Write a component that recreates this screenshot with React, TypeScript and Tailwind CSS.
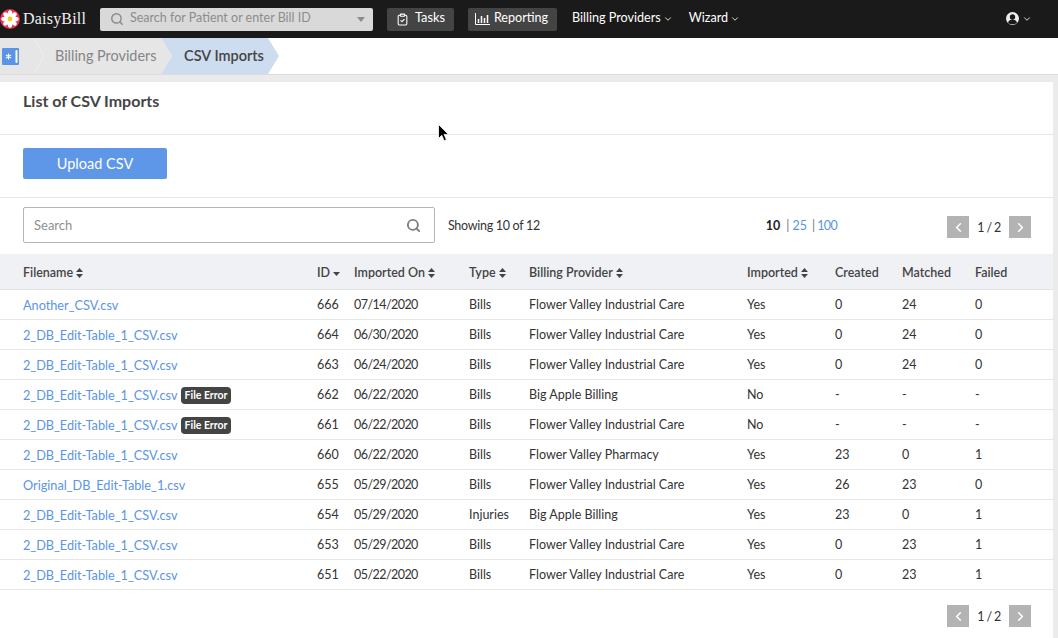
import React from "react";
import { ChevronDown, ChevronLeft, ChevronRight, Search, ClipboardCheck } from "lucide-react";

const font = "font-['Lato','Liberation_Sans',sans-serif]";

type Row = { f: string; err?: boolean; id: string; d: string; t: string; b: string; i: string; c: string; m: string; x: string };
const E = "2_DB_Edit-Table_1_CSV.csv";
const V = "Flower Valley Industrial Care";
const rows: Row[] = [
  { f: "Another_CSV.csv", id: "666", d: "07/14/2020", t: "Bills", b: V, i: "Yes", c: "0", m: "24", x: "0" },
  { f: E, id: "664", d: "06/30/2020", t: "Bills", b: V, i: "Yes", c: "0", m: "24", x: "0" },
  { f: E, id: "663", d: "06/24/2020", t: "Bills", b: V, i: "Yes", c: "0", m: "24", x: "0" },
  { f: E, err: true, id: "662", d: "06/22/2020", t: "Bills", b: "Big Apple Billing", i: "No", c: "-", m: "-", x: "-" },
  { f: E, err: true, id: "661", d: "06/22/2020", t: "Bills", b: V, i: "No", c: "-", m: "-", x: "-" },
  { f: E, id: "660", d: "06/22/2020", t: "Bills", b: "Flower Valley Pharmacy", i: "Yes", c: "23", m: "0", x: "1" },
  { f: "Original_DB_Edit-Table_1.csv", id: "655", d: "05/29/2020", t: "Bills", b: V, i: "Yes", c: "26", m: "23", x: "0" },
  { f: E, id: "654", d: "05/29/2020", t: "Injuries", b: "Big Apple Billing", i: "Yes", c: "23", m: "0", x: "1" },
  { f: E, id: "653", d: "05/29/2020", t: "Bills", b: V, i: "Yes", c: "0", m: "23", x: "1" },
  { f: E, id: "651", d: "05/22/2020", t: "Bills", b: V, i: "Yes", c: "0", m: "23", x: "1" },
];

const grid = "grid grid-cols-[294px_37px_115px_60px_218px_88px_67px_73px_1fr] pl-[23px] items-center";

function Sort() {
  return (
    <svg width="7" height="10" viewBox="0 0 7 10" className="ml-[3px] inline-block fill-[#444]">
      <path d="M3.5 0 7 4H0zM3.5 10 0 6h7z" />
    </svg>
  );
}

function Flower() {
  const petals = [0, 45, 90, 135, 180, 225, 270, 315];
  return (
    <svg width="20" height="20" viewBox="0 0 20 20" className="shrink-0">
      <circle cx="10" cy="10" r="10" fill="#e8304f" />
      {petals.map((a) => (
        <ellipse key={a} cx="10" cy="4.8" rx="2.3" ry="3.5" fill="#fff" transform={`rotate(${a} 10 10)`} />
      ))}
      <circle cx="10" cy="10" r="2.4" fill="#f6c81e" />
    </svg>
  );
}

function Pager() {
  return (
    <div className="flex items-center text-[12.5px] text-[#333]">
      <span className="flex h-[22px] w-[22px] items-center justify-center bg-[#b3b3b3] text-white">
        <ChevronLeft size={15} strokeWidth={2.5} />
      </span>
      <span className="w-[40px] pt-[2px] text-center tracking-[-0.6px]">1 / 2</span>
      <span className="flex h-[22px] w-[22px] items-center justify-center bg-[#b3b3b3] text-white">
        <ChevronRight size={15} strokeWidth={2.5} />
      </span>
    </div>
  );
}

export default function App() {
  return (
    <div className={`${font} relative h-[638px] w-[1058px] overflow-hidden bg-[#ebebeb] text-[13px] text-[#333]`}>
      <header className="flex h-[38px] items-center bg-[#1a1a1a] text-white">
        <div className="flex w-[100px] items-center">
          <Flower />
          <span className="ml-[3px] font-['Liberation_Serif',serif] text-[16px] tracking-[0.2px] text-[#f0f0f0]">DaisyBill</span>
        </div>
        <div className="flex h-[23px] w-[273px] items-center rounded-[2px] bg-[#d9d9d9] pl-[10px] pr-[8px] text-[#8c8c8c]">
          <Search size={14} strokeWidth={2.5} />
          <span className="ml-[6px] flex-1 pb-px text-[12.5px]">Search for Patient or enter Bill ID</span>
          <svg width="8" height="5" viewBox="0 0 8 5" className="fill-[#8c8c8c]"><path d="M0 0h8L4 5z" /></svg>
        </div>
        <div className="ml-[14px] flex h-[23px] w-[67px] items-center justify-center gap-[6px] rounded-[2px] bg-[#444] text-[12.8px]">
          <ClipboardCheck size={13} />
          <span className="pb-[2px]">Tasks</span>
        </div>
        <div className="ml-[14px] flex h-[23px] w-[89px] items-center justify-center gap-[4px] rounded-[2px] bg-[#444] pr-[2px] text-[12.6px]">
          <svg width="15" height="12" viewBox="0 0 15 12" fill="none" stroke="#fff">
            <path d="M.5 0v11.5H15" />
            <path d="M3.500 6v4M6.500 3v7M9.500 5v5M12.500 2v8" strokeWidth="1.500" />
          </svg>
          <span className="pb-px">Reporting</span>
        </div>
        <div className="ml-[15px] flex items-center pb-px text-[12.6px]">
          Billing Providers
          <ChevronDown size={10} strokeWidth={2} className="ml-[2px] mt-px" />
        </div>
        <div className="ml-[16px] flex items-center pb-px text-[12.6px]">
          Wizard
          <ChevronDown size={10} strokeWidth={2} className="ml-[2px] mt-px" />
        </div>
        <div className="ml-auto mr-[26px] flex items-center gap-[3px] pb-px">
          <svg width="13" height="13" viewBox="0 0 13 13">
            <circle cx="6.500" cy="6.500" r="6.500" fill="#eee" />
            <circle cx="6.500" cy="5" r="2.700" fill="#1a1a1a" />
            <path d="M2 11c.5-2.500 2.500-3.400 4.500-3.400s4 .9 4.500 3.400c-1.200 1-3 1.300-4.500 1.300S3 12 2 11z" fill="#1a1a1a" />
          </svg>
          <ChevronDown size={10} strokeWidth={2} />
        </div>
      </header>

      <nav className="flex h-[36px] items-stretch bg-white">
        <div className="relative flex w-[172px] items-center bg-[#e6e6e6] text-[14.4px] [clip-path:polygon(0_0,161px_0,172px_50%,161px_100%,0_100%)]">
          <svg width="17" height="17" viewBox="0 0 17 17" className="ml-[2px] shrink-0">
            <rect width="17" height="17" rx="1" fill="#5b94e6" />
            <rect x="13.500" y="2" width="2" height="13" rx="1" fill="#fff" />
            <path d="M6.500 5.500v6M4 7l5 3M9 7l-5 3" stroke="#fff" strokeWidth="1.100" />
          </svg>
          <svg width="12" height="36" viewBox="0 0 12 36" className="ml-[14px] shrink-0" fill="none" stroke="#efefef">
            <path d="M.5 0 11 18 .5 36" />
          </svg>
          <span className="ml-[10px] pb-px text-[#858585]">Billing Providers</span>
        </div>
        <div className="-ml-[11px] flex w-[118px] items-center bg-[#cddcee] pb-px pl-[23px] text-[14.5px] font-semibold text-[#444] [clip-path:polygon(0_0,107px_0,118px_50%,107px_100%,0_100%,11px_50%)]">
          CSV Imports
        </div>
      </nav>
      <div className="h-px bg-[#dcdcdc]" />

      <main className="mr-[5px] mt-[7px] flex h-[600px] flex-col bg-white">
        <div className="flex h-[53px] items-start border-b border-[#e6e6e6] pl-[23px] pt-[9px]">
          <h1 className="text-[16px] font-bold leading-[20px] text-[#444]">List of CSV Imports</h1>
        </div>
        <div className="flex h-[63px] items-start border-b border-[#e6e6e6] pl-[23px] pt-[13px]">
          <button className="h-[31px] w-[144px] rounded-[2px] bg-[#5f97e8] text-[14.5px] text-white">Upload CSV</button>
        </div>
        <div className="flex h-[56px] items-start pl-[23px] pt-[9px]">
          <div className="flex h-[36px] w-[412px] items-center rounded-[2px] border border-[#b5b5b5] pl-[10px] pr-[13px] text-[#8f8f8f]">
            <span className="flex-1 pt-px text-[13px]">Search</span>
            <Search size={15} strokeWidth={3} className="text-[#7d7d7d]" />
          </div>
          <span className="ml-[13px] mt-[10px] text-[12.5px] leading-[18px] tracking-[-0.3px]">Showing 10 of 12</span>
          <div className="ml-[226px] mt-[10px] flex items-center text-[12.5px] leading-[18px] text-[#5b94e6]">
            <b className="mr-[6px] text-[#222]">10</b>
            <span className="mr-[3px] text-[#777]">|</span>
            <span className="mr-[5px]">25</span>
            <span className="mr-[2px] text-[#777]">|</span>
            <span className="tracking-[-0.5px]">100</span>
          </div>
          <div className="ml-auto mr-[22px] mt-[9px]"><Pager /></div>
        </div>

        <div className={`${grid} h-[36px] border-b border-[#e3e3e3] bg-[#f0f1f5] pt-[3px] text-[12.5px] font-semibold text-[#444]`}>
          <span>Filename<Sort /></span>
          <span className="flex items-center">ID<svg width="7" height="4" viewBox="0 0 7 4" className="ml-[3px] mt-[2px] fill-[#444]"><path d="M0 0h7L3.500 4z" /></svg></span>
          <span>Imported On<Sort /></span>
          <span>Type<Sort /></span>
          <span>Billing Provider<Sort /></span>
          <span>Imported<Sort /></span>
          <span>Created</span>
          <span>Matched</span>
          <span>Failed</span>
        </div>
        {rows.map((r, idx) => (
          <div key={idx} className={`${grid} h-[30px] border-b border-[#e6e6e6] pt-[2px] text-[12.5px]`}>
            <span className="flex items-center">
              <span className="text-[12.7px] text-[#5b94e6]">{r.f}</span>
              {r.err && (
                <span className="ml-[3px] flex h-[17px] items-center rounded-[4px] bg-[#444] px-[4px] text-[10.5px] font-bold text-white">File Error</span>
              )}
            </span>
            <span>{r.id}</span>
            <span className="tracking-[-0.55px]">{r.d}</span>
            <span>{r.t}</span>
            <span>{r.b}</span>
            <span>{r.i}</span>
            <span>{r.c}</span>
            <span>{r.m}</span>
            <span>{r.x}</span>
          </div>
        ))}
        <div className="mr-[22px] mt-[15px] flex justify-end"><Pager /></div>
      </main>

      <svg width="12" height="18" viewBox="0 0 12 18" className="absolute left-[438px] top-[124px]">
        <path d="M.5.5v14l3.300-3.200 2.300 5.400 2.300-1-2.300-5.300H10.500z" fill="#000" stroke="#fff" strokeWidth=".8" />
      </svg>
    </div>
  );
}
